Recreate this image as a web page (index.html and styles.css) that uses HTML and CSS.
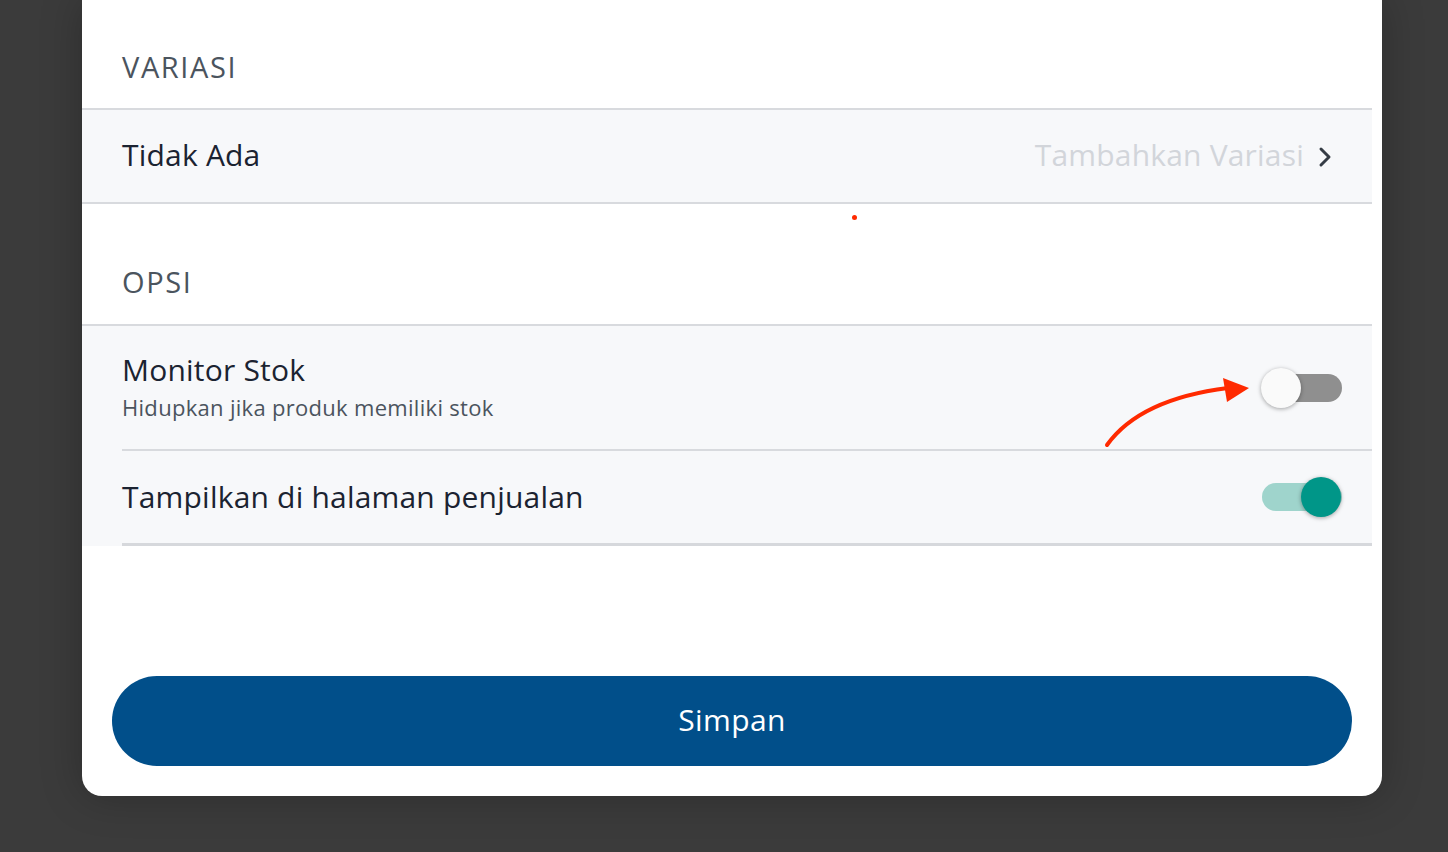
FILE: index.html
```html
<!doctype html>
<html lang="en">
  <head>
    <meta charset="UTF-8" />
    <meta name="viewport" content="width=device-width, initial-scale=1.0" />
    <title>Edit Produk</title>
    <link rel="stylesheet" href="styles.css">
  </head>
  <body>
    <div class="sheet">
      <div class="section-title first">VARIASI</div>
      <div class="list">
        <div class="row row-link">
          <span class="row-label">Tidak Ada</span>
          <span class="row-action">
            Tambahkan Variasi
            <svg class="chevron" width="14" height="22" viewBox="0 0 14 22">
              <polyline points="3,3 11,11 3,19" fill="none" stroke="#353c45" stroke-width="3" stroke-linecap="round" stroke-linejoin="round" />
            </svg>
          </span>
        </div>
      </div>

      <div class="dot"></div>

      <div class="section-title">OPSI</div>
      <div class="list list-options">
        <div class="option">
          <div class="option-inner">
            <div>
              <div class="row-label">Monitor Stok</div>
              <div class="row-sub">Hidupkan jika produk memiliki stok</div>
            </div>
            <span class="switch"><span class="knob"></span></span>
          </div>
        </div>
        <div class="option">
          <div class="option-inner last">
            <div class="row-label">Tampilkan di halaman penjualan</div>
            <span class="switch on"><span class="knob"></span></span>
          </div>
        </div>
      </div>

      <button class="save">Simpan</button>

      <!-- annotation arrow -->
      <svg class="arrow" width="160" height="80" viewBox="0 0 160 80">
        <path d="M7 70 Q40 24 128 13" fill="none" stroke="#ff2a00" stroke-width="4" stroke-linecap="round" />
        <polygon points="123,3 149,13 127,27" fill="#ff2a00" />
      </svg>
    </div>
  </body>
</html>
```

FILE: styles.css
```css
* {
  box-sizing: border-box;
}
body {
  margin: 0;
  background: #3b3b3b;
  font-family: 'Open Sans', Lato, sans-serif;
  height: 852px;
  overflow: hidden;
}
.sheet {
  position: relative;
  width: 1300px;
  margin-left: 82px;
  background: #fff;
  border-radius: 0 0 20px 20px;
  padding-bottom: 30px;
  box-shadow: 0 0 40px rgba(0, 0, 0, 0.25);
}
.section-title {
  padding: 61px 40px 21px;
  font-size: 29px;
  line-height: 38px;
  letter-spacing: 1.6px;
  color: #4b545e;
}
.section-title.first {
  padding-top: 48px;
  padding-bottom: 22px;
}
.list {
  margin-right: 10px;
  background: #f7f8fa;
  border-top: 2px solid #d8dade;
  border-bottom: 2px solid #d8dade;
}
.row {
  display: flex;
  align-items: center;
  justify-content: space-between;
  height: 92px;
  padding: 0 40px 3px;
}
.row-label {
  font-size: 30px;
  line-height: 36px;
  letter-spacing: 0.2px;
  color: #1b2331;
}
.row-action {
  display: flex;
  align-items: center;
  gap: 14px;
  font-size: 30px;
  letter-spacing: 0.2px;
  color: #d2d5da;
}
.chevron {
  display: block;
  margin-top: 4px;
}
.dot {
  width: 5px;
  height: 5px;
  border-radius: 50%;
  background: #ff2a00;
  margin: 11px 0 0 770px;
}
.list-options {
  border-bottom: none;
}
.dot + .section-title {
  padding-top: 43px;
  padding-bottom: 23px;
}
.option {
  padding-left: 40px;
}
.option-inner {
  display: flex;
  align-items: center;
  justify-content: space-between;
  padding: 0 30px 0 0;
  border-bottom: 2px solid #d8dade;
  min-height: 92px;
}
.option:first-child .option-inner {
  padding: 26px 30px 28px 0;
}
.option-inner.last {
  border-bottom: 3px solid #d6d8dc;
  min-height: 95px;
}
.row-sub {
  margin-top: 5px;
  font-size: 22px;
  line-height: 28px;
  letter-spacing: 0.3px;
  color: #4b545e;
}
.switch {
  position: relative;
  width: 80px;
  height: 28px;
  border-radius: 14px;
  background: #8f8f8f;
  flex-shrink: 0;
}
.switch .knob {
  position: absolute;
  left: -1px;
  top: -6px;
  width: 40px;
  height: 40px;
  border-radius: 50%;
  background: #fafafa;
  box-shadow: 0 1px 4px rgba(0, 0, 0, 0.35);
}
.switch.on {
  background: #9fd4cc;
}
.switch.on .knob {
  left: 39px;
  background: #009688;
}
.option:first-child .switch {
  margin-top: 2px;
}
.save {
  display: block;
  width: 1240px;
  height: 90px;
  margin: 130px 0 0 30px;
  border: none;
  border-radius: 45px;
  background: #014f8a;
  color: #fff;
  font-family: inherit;
  font-size: 30px;
  letter-spacing: 0.4px;
  padding-bottom: 4px;
}
.arrow {
  position: absolute;
  left: 1018px;
  top: 375px;
}
```
